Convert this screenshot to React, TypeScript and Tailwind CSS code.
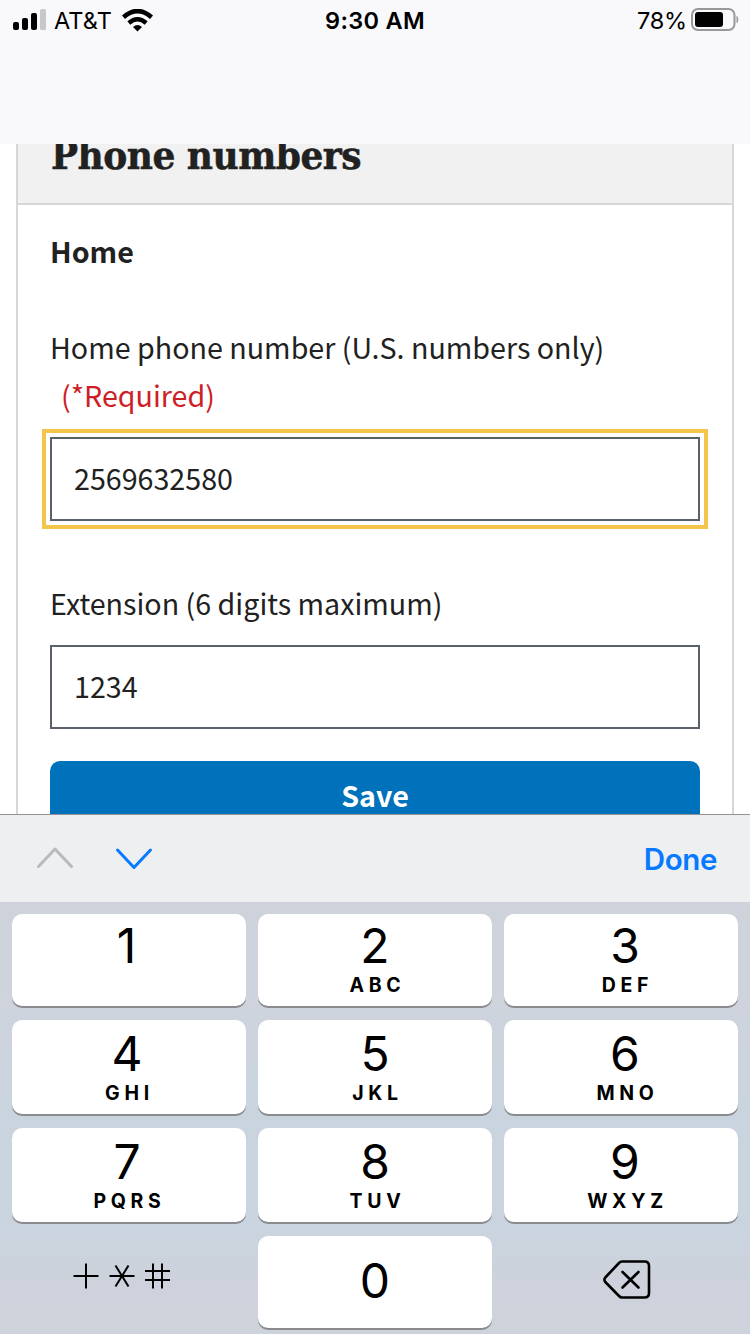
const sans = "font-['Noto_Sans_CJK_SC',sans-serif]";

type KeyProps = { digit: string; letters?: string; className?: string };

function Key({ digit, letters, className = "pt-[8px]" }: KeyProps) {
  return (
    <button className={`flex flex-col items-center rounded-[10px] bg-white shadow-[0_2px_0_#898b8f] ${className}`}>
      <span className="text-[48px] leading-[48px]">{digit}</span>
      {letters && (
        <span className="mt-[5px] pl-[5px] text-[19.5px] leading-[20px] font-bold tracking-[4.7px]">{letters}</span>
      )}
    </button>
  );
}

function StatusBar() {
  return (
    <header className="h-[144px] shrink-0 bg-[#f9f9fb] text-black">
      <div className="grid h-[40px] grid-cols-3 items-center text-[23.5px]">
        <div className="flex items-center pl-[13px]">
          <svg width="34" height="22" viewBox="0 0 34 22">
            <rect x="0" y="13" width="6" height="8" rx="2" />
            <rect x="9" y="9" width="6" height="12" rx="2" />
            <rect x="18" y="4" width="6" height="17" rx="2" />
            <rect x="27" y="0" width="6" height="21" rx="1.500" fill="#c8c8ca" />
          </svg>
          <span className="ml-[7px] w-[59px] pt-[2px] text-[23.5px] tracking-[0.1px] whitespace-nowrap">AT&amp;T</span>
          <svg className="ml-[9px]" width="31" height="23" viewBox="0 0 31 23">
            <path d="M1.500 8.200 Q15.500 -4 29.500 8.200" fill="none" stroke="#000" strokeWidth="4.600" />
            <path d="M6.800 14 Q15.500 6.500 24.200 14" fill="none" stroke="#000" strokeWidth="4.400" />
            <path d="M11 18 Q15.500 14 20 18 L15.500 22.500 Z" />
          </svg>
        </div>
        <div className="pt-[2px] text-center font-semibold tracking-[0.3px]">9:30 AM</div>
        <div className="flex items-center justify-end pr-[11px]">
          <span className="mr-[4px] pt-[2px] text-[23.5px] tracking-[-0.2px]">78%</span>
          <svg width="48" height="24" viewBox="0 0 48 24">
            <rect x="1" y="1" width="42.500" height="21" rx="6" fill="none" stroke="#98989b" strokeWidth="2" />
            <rect x="4" y="4" width="28" height="15" rx="3" />
            <path d="M46 8.500 Q47.800 11.500 46 14.500 Z" fill="#98989b" stroke="#98989b" />
          </svg>
        </div>
      </div>
    </header>
  );
}

function PhoneForm() {
  return (
    <main className={`h-[670px] shrink-0 overflow-hidden bg-white px-[16px] text-[28.65px] leading-[48px] text-[#212121] ${sans}`}>
      <section className="h-[760px] border-x-2 border-[#d6d7d9]">
        <div className="h-[61px] overflow-hidden border-b-2 border-[#d6d7d9] bg-[#f1f1f1] px-[33px]">
          <h2 className="-mt-[14px] font-['DejaVu_Serif_Condensed','DejaVu_Serif',serif] text-[40px] leading-[50px] font-bold tracking-[-0.5px] whitespace-nowrap [-webkit-text-stroke:0.5px_#212121]">
            Phone numbers
          </h2>
        </div>
        <div className="flex flex-col px-[32px] pt-[22px]">
          <h3 className="font-bold">Home</h3>
          <label className="mt-[48px] flex flex-col whitespace-nowrap">
            <span>Home phone number (U.S. numbers only)</span>
            <span className="pl-[11px] text-[#cd2026]">(*Required)</span>
          </label>
          <div className="mt-[18px] flex h-[84px] items-center border-2 border-[#5b616b] px-[22px] pb-[2px] outline-4 outline-offset-4 outline-[#f3c64b]">
            2569632580
          </div>
          <label className="mt-[58px]">Extension (6 digits maximum)</label>
          <div className="mt-[18px] flex h-[84px] items-center border-2 border-[#5b616b] px-[22px] pb-[2px]">1234</div>
          <button className="mt-[32px] flex h-[88px] justify-center rounded-[10px] bg-[#0071bb] pt-[10px] font-bold text-white">
            Save
          </button>
        </div>
      </section>
    </main>
  );
}

function AccessoryBar() {
  return (
    <div className="flex h-[88px] shrink-0 items-center border-t border-[#909296] bg-[#edeff1] pr-[33px] pl-[36px]">
      <svg width="38" height="26" viewBox="0 0 38 26" fill="none" stroke="#b9babc" strokeWidth="3" strokeLinecap="round" strokeLinejoin="round">
        <path d="M2.500 20.500 L19 3 L35.500 20.500" />
      </svg>
      <svg className="ml-[41px]" width="38" height="26" viewBox="0 0 38 26" fill="none" stroke="#087aff" strokeWidth="3" strokeLinecap="round" strokeLinejoin="round">
        <path d="M2.500 4 L19 21.500 L35.500 4" />
      </svg>
      <button className="ml-auto pt-[2px] text-[29.5px] font-semibold tracking-[-0.4px] text-[#087aff]">Done</button>
    </div>
  );
}

function Keypad() {
  return (
    <div className="grid flex-1 grid-cols-3 grid-rows-[92px_94px_94px_92px] gap-x-[12px] gap-y-[14px] bg-[linear-gradient(180deg,#ced2db_0%,#cfd3dc_20%,#c9d4df_50%,#c9d4df_72%,#cdd2dc_88%,#ced2db_100%)] px-[12px] pt-[12px] text-black">
      <Key digit="1" className="pt-[8px] pr-[5px]" />
      <Key digit="2" letters="ABC" />
      <Key digit="3" letters="DEF" className="pt-[8px] pl-[8px]" />
      <Key digit="4" letters="GHI" className="pt-[10px] pr-[4px]" />
      <Key digit="5" letters="JKL" className="pt-[10px]" />
      <Key digit="6" letters="MNO" className="pt-[10px] pl-[8px]" />
      <Key digit="7" letters="PQRS" className="pt-[10px] pr-[4px]" />
      <Key digit="8" letters="TUV" className="pt-[10px]" />
      <Key digit="9" letters="WXYZ" className="pt-[10px] pl-[8px]" />
      <button className="flex justify-center pt-[26px]" aria-label="Symbols">
        <svg className="-ml-[15px]" width="98" height="28" viewBox="0 0 98 28" fill="none" stroke="#000" strokeWidth="2">
          <path d="M0.500 14 H25.500 M13 1.500 V26.500" />
          <path d="M36.500 14 H61.500 M42.500 3.500 L55.500 24.500 M55.500 3.500 L42.500 24.500" />
          <path d="M72 9 H97 M72 18 H97 M80 1.500 V26.500 M89 1.500 V26.500" />
        </svg>
      </button>
      <button className="flex justify-center rounded-[10px] bg-white pt-[21px] text-[48px] leading-[48px] shadow-[0_2px_0_#898b8f]">0</button>
      <button className="flex justify-center pt-[24px]" aria-label="Delete">
        <svg className="ml-[11px]" width="48" height="40" viewBox="0 0 48 40" fill="none" stroke="#000" strokeWidth="2.600" strokeLinecap="round" strokeLinejoin="round">
          <path d="M19 1.500 H41.500 Q46 1.500 46 6 V33 Q46 37.500 41.500 37.500 H19 Q17.500 37.500 16 36 L2.300 22 Q0.500 19.750 2.300 17.500 L16 3 Q17.500 1.500 19 1.500 Z" />
          <path d="M19.500 12 L35.500 27.500 M35.500 12 L19.500 27.500" />
        </svg>
      </button>
    </div>
  );
}

export default function App() {
  return (
    <div className="flex h-[1334px] w-[750px] flex-col overflow-hidden font-['Inter',sans-serif]">
      <StatusBar />
      <PhoneForm />
      <AccessoryBar />
      <Keypad />
    </div>
  );
}
